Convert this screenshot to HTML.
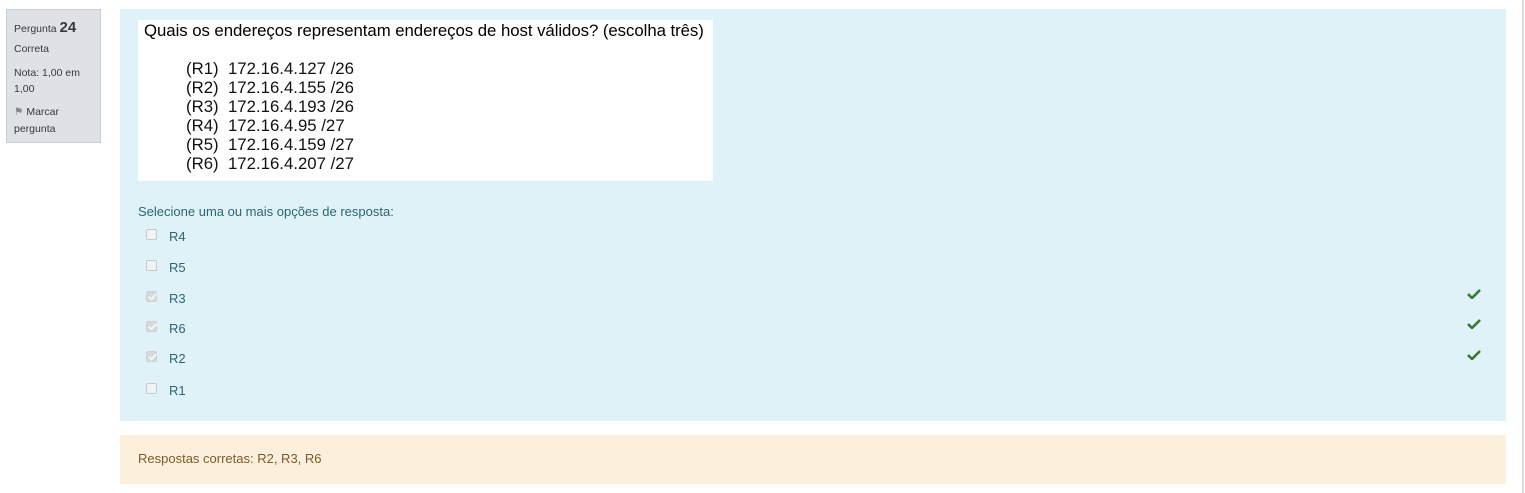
<!DOCTYPE html>
<html><head><meta charset="utf-8"><style>
*{margin:0;padding:0;box-sizing:border-box}
body{width:1525px;height:493px;background:#fff;position:relative;overflow:hidden;font-family:"Liberation Sans",Arial,sans-serif;color:#373a3c}
.abs{position:absolute}
.side{left:6px;top:9px;width:95px;height:134px;background:#dee2e6;border:1px solid #c8cdd2}
.side div{position:absolute;left:7px;font-size:10.5px;color:#373a3c;white-space:nowrap}
.main{left:120px;top:9px;width:1386px;height:412px;background:#def2f8}
.img{left:138px;top:20px;width:575px;height:161px;background:#fff;font-family:"Liberation Sans",Arial,sans-serif;color:#000}
.img .t{position:absolute;left:6px;top:1px;font-size:16.8px;white-space:nowrap;letter-spacing:-0.05px}
.img .l{position:absolute;left:48px;font-size:16.8px;white-space:pre;line-height:19px;color:#111}
.sel{left:138px;top:204px;font-size:13px;color:#2f6473}
.cb{position:absolute;left:146px;width:11px;height:11px;border:1px solid #c6c9cc;border-radius:2px;background:#f2f3f4}
.cb.c{background:#d6d8da;border-color:#cfd1d3}
.cb.c::after{content:"";position:absolute;left:3px;top:0px;width:3px;height:6px;border:solid #f4f4f4;border-width:0 2px 2px 0;transform:rotate(40deg)}
.lab{position:absolute;left:169px;font-size:13px;color:#2f6473}
.ok{position:absolute;left:1467px;width:14px;height:10px}
.fb{left:120px;top:435px;width:1386px;height:49px;background:#fcefdc}
.fb span{position:absolute;left:18px;top:16px;font-size:13px;color:#7d5a29}
.rb{left:1522px;top:0;width:2px;height:493px;background:#dcdcdc}
</style></head><body>
<div class="abs side">
<div style="top:9px">Pergunta <b style="font-size:15px">24</b></div>
<div style="top:33px">Correta</div>
<div style="top:57px">Nota: 1,00 em</div>
<div style="top:73px">1,00</div>
<div style="top:96px"><span style="color:#888">&#9873;</span> Marcar</div>
<div style="top:113px">pergunta</div>
</div>
<div class="abs main"></div>
<div class="abs img">
<div class="t">Quais os endereços representam endereços de host válidos? (escolha três)</div>
<div class="l" style="top:39px">(R1)  172.16.4.127 /26
(R2)  172.16.4.155 /26
(R3)  172.16.4.193 /26
(R4)  172.16.4.95 /27
(R5)  172.16.4.159 /27
(R6)  172.16.4.207 /27</div>
</div>
<div class="abs sel">Selecione uma ou mais opções de resposta:</div>
<div class="cb" style="top:229px"></div><div class="lab" style="top:229px">R4</div>
<div class="cb" style="top:260px"></div><div class="lab" style="top:260px">R5</div>
<div class="cb c" style="top:291px"></div><div class="lab" style="top:291px">R3</div>
<div class="cb c" style="top:321px"></div><div class="lab" style="top:321px">R6</div>
<div class="cb c" style="top:351px"></div><div class="lab" style="top:351px">R2</div>
<div class="cb" style="top:383px"></div><div class="lab" style="top:383px">R1</div>
<svg class="ok" style="top:289px" viewBox="0 0 14 10"><path d="M1 5 L5 9 L13 1" fill="none" stroke="#357a32" stroke-width="2.6"/></svg>
<svg class="ok" style="top:319px" viewBox="0 0 14 10"><path d="M1 5 L5 9 L13 1" fill="none" stroke="#357a32" stroke-width="2.6"/></svg>
<svg class="ok" style="top:350px" viewBox="0 0 14 10"><path d="M1 5 L5 9 L13 1" fill="none" stroke="#357a32" stroke-width="2.6"/></svg>
<div class="abs fb"><span>Respostas corretas: R2, R3, R6</span></div>
<div class="abs rb"></div>
</body></html>
